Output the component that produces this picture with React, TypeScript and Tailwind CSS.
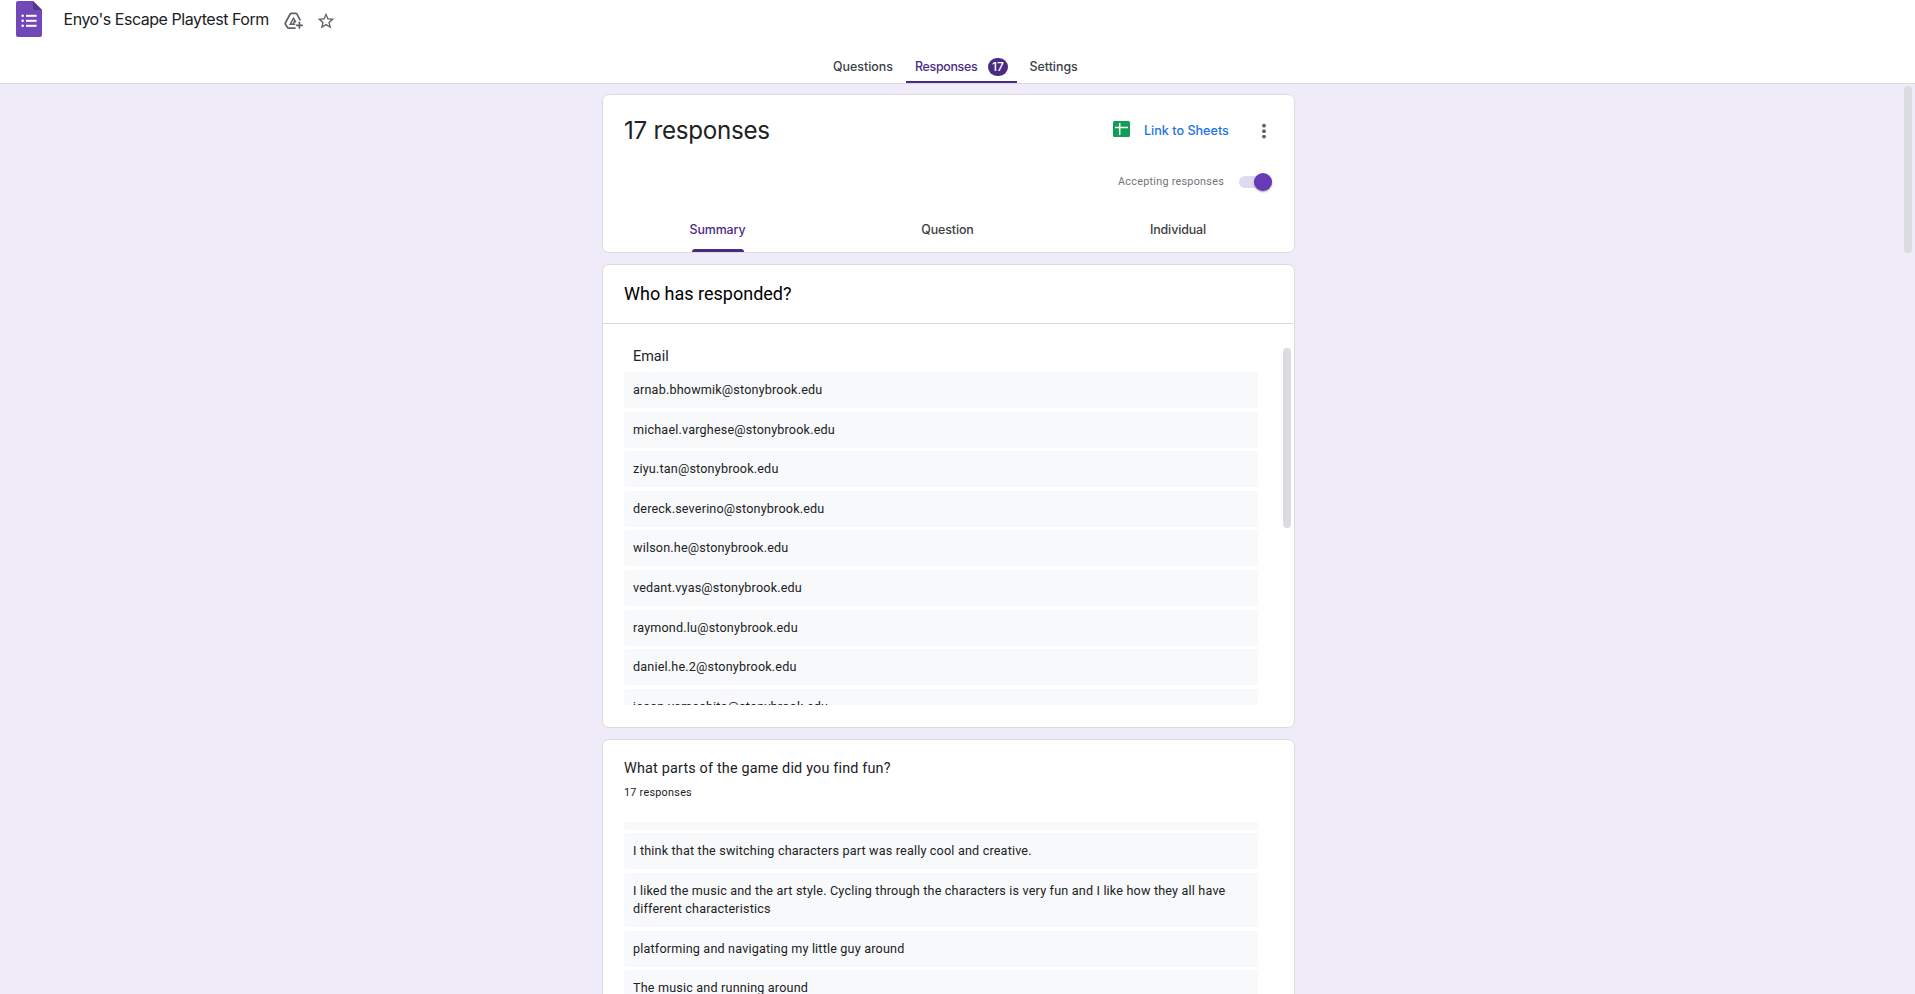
import type { ReactNode } from "react";

const emails = [
  "arnab.bhowmik@stonybrook.edu",
  "michael.varghese@stonybrook.edu",
  "ziyu.tan@stonybrook.edu",
  "dereck.severino@stonybrook.edu",
  "wilson.he@stonybrook.edu",
  "vedant.vyas@stonybrook.edu",
  "raymond.lu@stonybrook.edu",
  "daniel.he.2@stonybrook.edu",
  "jason.yamashita@stonybrook.edu",
];

const answers = [
  "I think that the switching characters part was really cool and creative.",
  "I liked the music and the art style. Cycling through the characters is very fun and I like how they all have different characteristics",
  "platforming and navigating my little guy around",
  "The music and running around",
];

function FormsLogo() {
  return (
    <svg width="26" height="36" viewBox="0 0 26 36" className="block">
      <path d="M2 0H17L26 9V34a2 2 0 0 1-2 2H2a2 2 0 0 1-2-2V2a2 2 0 0 1 2-2Z" fill="#7248b9" />
      <path d="M17 0l9 9h-7a2 2 0 0 1-2-2Z" fill="#563688" />
      <g fill="#fff">
        <circle cx="6.7" cy="14.8" r="1.3" />
        <circle cx="6.7" cy="19.8" r="1.3" />
        <circle cx="6.7" cy="24.8" r="1.3" />
        <rect x="10" y="13.8" width="10.6" height="2" />
        <rect x="10" y="18.8" width="10.6" height="2" />
        <rect x="10" y="23.8" width="10.6" height="2" />
      </g>
    </svg>
  );
}

function DriveAddIcon() {
  return (
    <svg width="20" height="18" viewBox="0 0 20 18" fill="none" stroke="#5f6368" strokeWidth="1.7" className="block">
      <path d="M11.6 16.2H4.4a1 1 0 0 1-.8-.4L1.3 12a1 1 0 0 1 0-1L6.2 2a1.2 1.2 0 0 1 1-.7h4.6a1.2 1.2 0 0 1 1 .6l3.6 6.4" />
      <path d="M11.2 12.2H6.2L9.5 6.2l2.4 4.2M10.9 8.6l-1.9 3.4" strokeWidth="1.5" />
      <path d="M15.4 9.8v7M11.9 13.3h7" />
    </svg>
  );
}

function StarIcon() {
  return (
    <svg width="20" height="20" viewBox="0 0 24 24" fill="#5f6368" className="block">
      <path d="M22 9.24l-7.19-.62L12 2 9.19 8.63 2 9.24l5.46 4.73L5.82 21 12 17.27 18.18 21l-1.63-7.03L22 9.24zM12 15.4l-3.76 2.27 1-4.28-3.32-2.88 4.38-.38L12 6.1l1.71 4.04 4.38.38-3.32 2.88 1 4.28L12 15.4z" />
    </svg>
  );
}

function SheetsIcon() {
  return (
    <svg width="17" height="16" viewBox="0 0 17 16" className="mb-[4px] block">
      <rect width="17" height="16" rx="1.5" fill="#0f9d58" />
      <path d="M2 6.5h13M6.7 2v12" stroke="#fff" strokeWidth="1.5" />
    </svg>
  );
}

function Card({ className, children }: { className: string; children: ReactNode }) {
  return (
    <section className={`w-[693px] shrink-0 rounded-[7px] border border-[#dadce0] bg-white ${className}`}>
      {children}
    </section>
  );
}

function Row({ text }: { text: string }) {
  return (
    <li className="mb-[3.6px] rounded-l-[4px] bg-[#f8f9fa] px-[9px] py-[9px] text-[12.6px] leading-[18px] tracking-[0.18px] text-[#202124]">
      {text}
    </li>
  );
}

export default function App() {
  return (
    <div className="flex h-[994px] w-full flex-col overflow-hidden bg-[#f0ebf8] font-[Roboto,sans-serif] text-[#202124]">
      <header className="flex h-[84px] shrink-0 flex-col justify-between border-b border-[#dadce0] bg-white">
        <div className="flex h-[39px] items-center pl-4">
          <div className="h-[37px]">
            <FormsLogo />
          </div>
          <h1 className="mb-px ml-[21.5px] w-[220.5px] font-[Inter,sans-serif] text-[16px] leading-6 tracking-[-0.47px] whitespace-nowrap">
            Enyo's Escape Playtest Form
          </h1>
          <div className="mt-[2px]">
            <DriveAddIcon />
          </div>
          <div className="ml-[12px] mt-[2px]">
            <StarIcon />
          </div>
        </div>
        <nav className="flex h-[34px] pl-[824px] font-[Inter,sans-serif] text-[12.4px] font-medium leading-[36px] text-[#3c4043]">
          <span className="w-[82px] pl-[9px]">Questions</span>
          <span className="flex w-[111px] border-b-2 border-[#4b2a86] pl-[9px] text-[#4b2a86]">
            <span className="w-[73px] tracking-[-0.3px]">Responses</span>
            <span className="mt-[9px] h-[18px] w-5 rounded-full bg-[#4b2a86] text-center text-[12px] leading-[17px] text-white">17</span>
          </span>
          <span className="pl-[12.5px]">Settings</span>
        </nav>
      </header>

      <div className="flex min-h-0 flex-1 justify-between pl-[602px]">
        <main className="flex w-[693px] flex-col gap-[11px] pt-[10px]">
          <Card className="flex h-[159px] flex-col justify-between">
            <div className="flex justify-between pl-[21px]">
              <h2 className="pt-[20px] font-[Inter,sans-serif] text-[24.2px] leading-8 tracking-[-0.28px]">17 responses</h2>
              <div className="w-[181px] pt-[26px]">
                <div className="flex h-[20px] items-center font-[Inter,sans-serif] text-[12.6px] font-medium text-[#1a73e8]">
                  <SheetsIcon />
                  <span className="w-[117px] pl-[14px]">Link to Sheets</span>
                  <svg width="4" height="16" viewBox="0 0 4 16" fill="#5f6368" className="ml-[15px]">
                    <circle cx="2" cy="2.7" r="1.9" />
                    <circle cx="2" cy="8.2" r="1.9" />
                    <circle cx="2" cy="13.6" r="1.9" />
                  </svg>
                </div>
                <div className="mt-[31px] flex h-[20px] items-center pl-[5px]">
                  <span className="w-[121px] pt-px text-[10.8px] tracking-[0.27px] text-[#70757a]">Accepting responses</span>
                  <span className="flex h-3 w-[33px] items-center justify-end rounded-full bg-[#e1d8f1]">
                    <span className="size-[18px] rounded-full bg-[#673ab7] shadow-[0_1px_2px_rgba(0,0,0,0.35)]" />
                  </span>
                </div>
              </div>
            </div>
            <div className="flex h-[42px] font-[Inter,sans-serif] text-[12.4px] font-medium tracking-[-0.1px] text-[#3c4043]">
              <div className="flex w-[229px] flex-col items-center justify-between text-[#4b2a86]">
                <span className="pt-[10px] leading-[20px]">Summary</span>
                <span className="h-[3px] w-[52px] rounded-t-[3px] bg-[#4b2a86]" />
              </div>
              <div className="w-[231px] pt-[10px] text-center leading-[20px]">Question</div>
              <div className="w-[230px] pt-[10px] text-center leading-[20px]">Individual</div>
            </div>
          </Card>

          <Card className="h-[464px]">
            <h2 className="h-[59px] border-b border-[#dadce0] pl-[21px] pt-[18px] text-[18px] leading-[22px] text-black">
              Who has responded?
            </h2>
            <div className="flex justify-between pl-[21px] pr-[3px] pt-[24px]">
              <div className="h-[357px] w-[634px] overflow-hidden">
                <h3 className="h-[24px] pl-[9px] text-[14.4px] leading-[17px]">Email</h3>
                <ul>
                  {emails.map((email) => (
                    <Row key={email} text={email} />
                  ))}
                </ul>
              </div>
              <div className="h-[180px] w-2 rounded-full bg-[#dadce0]" />
            </div>
          </Card>

          <Card className="h-[460px] pl-[21px]">
            <h2 className="pt-[18px] text-[14.4px] leading-[22px] tracking-[0.18px]">What parts of the game did you find fun?</h2>
            <p className="pt-[4px] text-[10.8px] leading-[18px] tracking-[0.27px]">17 responses</p>
            <ul className="mt-[20px] w-[634px]">
              <li className="mb-[3.4px] h-[8px] rounded-bl-[4px] bg-[#f8f9fa]" />
              {answers.map((answer) => (
                <Row key={answer} text={answer} />
              ))}
            </ul>
          </Card>
        </main>
        <div className="mr-[3px] mt-[2px] h-[167px] w-2 rounded-full bg-[#dadce0]" />
      </div>
    </div>
  );
}
